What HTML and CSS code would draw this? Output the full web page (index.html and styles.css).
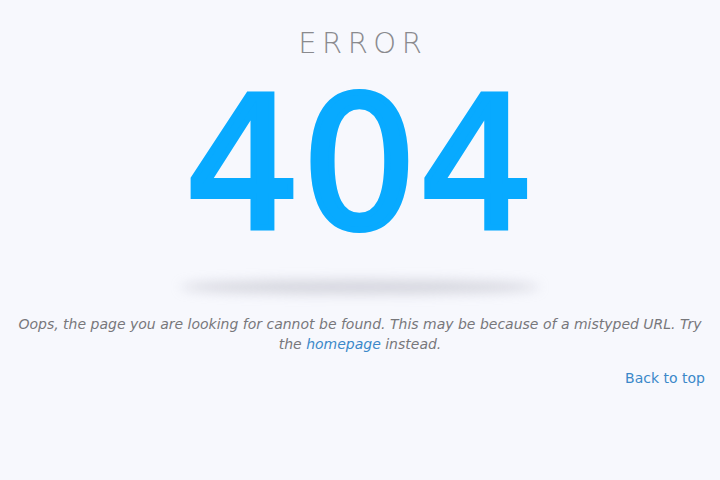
FILE: index.html
```html
<!DOCTYPE html>
<html>
<head>
<meta charset="utf-8">
<link rel="stylesheet" href="styles.css">
</head>
<body>
<main class="page">
  <div class="error-label">ERROR</div>
  <div class="code">404</div>
  <div class="shadow"></div>
  <p class="message">Oops, the page you are looking for cannot be found. This may be because of a mistyped URL. Try the <a href="#">homepage</a> instead.</p>
  <div class="back"><a href="#">Back to top</a></div>
</main>
</body>
</html>
```

FILE: styles.css
```css
html, body {
  margin: 0;
  padding: 0;
  background: #f7f8fd;
  font-family: "DejaVu Sans", sans-serif;
}
.page {
  display: flex;
  flex-direction: column;
  align-items: center;
  padding: 0 15px;
}
.error-label {
  margin-top: 26px;
  font-size: 29px;
  font-weight: 200;
  letter-spacing: 5.5px;
  color: #8a8a8e;
  line-height: 34px;
  padding-left: 5.5px;
}
.code {
  font-size: 182px;
  font-weight: normal;
  color: #08aaff;
  -webkit-text-stroke: 6px #08aaff;
  line-height: 190px;
  margin-top: 9px;
  letter-spacing: 1px;
}
.shadow {
  width: 360px;
  height: 14px;
  border-radius: 50%;
  background: rgba(170, 170, 185, 0.45);
  filter: blur(6px);
  margin-top: 21px;
}
.message {
  margin: 20px 0 0;
  font-size: 14px;
  font-style: italic;
  line-height: 20px;
  color: #77777b;
  text-align: center;
}
.message a, .back a {
  color: #3b88c9;
  text-decoration: none;
}
.back {
  align-self: stretch;
  text-align: right;
  font-size: 14px;
  margin-top: 16px;
}
```
